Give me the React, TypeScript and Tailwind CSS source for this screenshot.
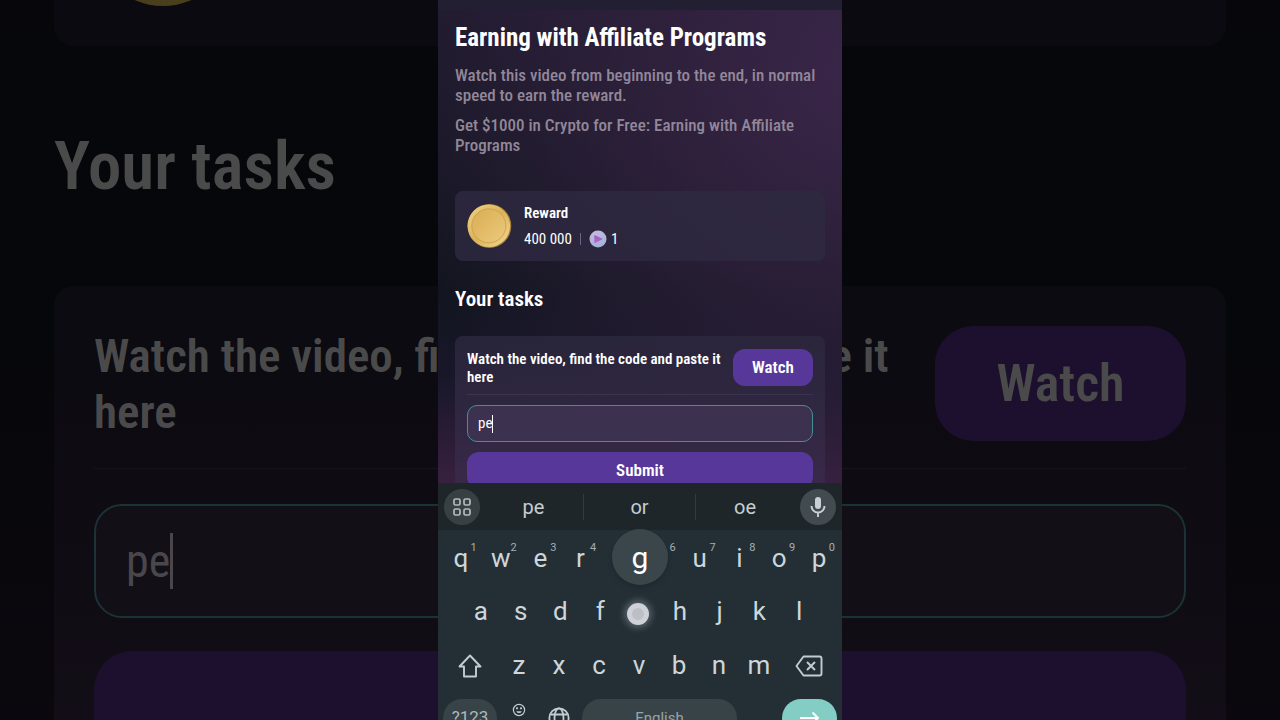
import { useState } from "react";

const topRow = ["q", "w", "e", "r", "t", "y", "u", "i", "o", "p"];
const middleRow = ["a", "s", "d", "f", "g", "h", "j", "k", "l"];
const bottomRow = ["z", "x", "c", "v", "b", "n", "m"];
const suggestions = ["pe", "or", "oe"];

function Coin({ className }: { className: string }) {
  return (
    <svg viewBox="0 0 46 46" className={className} aria-hidden="true">
      <defs>
        <linearGradient id="coinRim" x1="0" y1="0" x2="1" y2="1">
          <stop offset="0" stopColor="#efd48a" />
          <stop offset="0.5" stopColor="#dcb257" />
          <stop offset="1" stopColor="#f3dc97" />
        </linearGradient>
        <linearGradient id="coinFace" x1="0" y1="0" x2="1" y2="1">
          <stop offset="0" stopColor="#d9ac52" />
          <stop offset="1" stopColor="#ecca7d" />
        </linearGradient>
      </defs>
      <ellipse cx="22.5" cy="23" rx="21.8" ry="22" fill="#a67f3a" />
      <circle cx="21.8" cy="22.8" r="21.3" fill="url(#coinRim)" />
      <circle cx="21.8" cy="22.8" r="17" fill="url(#coinFace)" stroke="#c39a4a" strokeWidth="0.7" />
    </svg>
  );
}

function Token() {
  return (
    <svg viewBox="0 0 18 18" className="size-[18px]" aria-hidden="true">
      <defs>
        <linearGradient id="token" x1="0" y1="0" x2="0.3" y2="1">
          <stop offset="0" stopColor="#cdb9dc" />
          <stop offset="1" stopColor="#a3b3da" />
        </linearGradient>
        <linearGradient id="tokenPlay" x1="0" y1="0" x2="0" y2="1">
          <stop offset="0" stopColor="#8c62c6" />
          <stop offset="1" stopColor="#c263cb" />
        </linearGradient>
      </defs>
      <circle cx="9" cy="9" r="8.5" fill="url(#token)" />
      <path d="M6 5.2 13 8.6Q13.8 9.1 13 9.6L6 13Q5.3 13.2 5.3 12.4L5.3 5.8Q5.3 5 6 5.2Z" fill="url(#tokenPlay)" />
    </svg>
  );
}

function Backdrop() {
  return (
    <div
      aria-hidden="true"
      className="[grid-area:1/1] flex flex-col overflow-hidden px-[54px] text-[#4a4a4b] bg-[linear-gradient(#07070b,#06070a_40%,#0b070e)]"
    >
      <div className="h-[46px] shrink-0 overflow-hidden rounded-b-[20px] bg-[#0a0a10] pl-[38px]">
        <div className="-mt-[136px] size-[142px] rounded-full bg-[#4a3f1d]" />
      </div>
      <h2 className="mt-[80px] text-[67px] leading-[80px] font-semibold">Your tasks</h2>
      <div className="mt-[80px] shrink-0 rounded-t-[20px] bg-[linear-gradient(#0b0b11,#0e0b12_40%,#130e17)] px-10 pt-10">
        <div className="flex items-start justify-between border-b border-[#15131b] pb-[27px]">
          <p className="w-[800px] pt-[2px] text-[47px] leading-[56px] font-semibold">
            Watch the video, find the code and paste it here
          </p>
          <button tabIndex={-1} className="h-[115px] w-[251px] rounded-[38px] bg-[#1c102e] text-[52px] font-semibold">
            Watch
          </button>
        </div>
        <div className="mt-[35px] flex h-[114px] items-center rounded-[28px] border-2 border-[#1b3336] bg-[#120f17] px-[30px]">
          <input
            readOnly
            tabIndex={-1}
            aria-label="Code"
            value="pe"
            className="field-sizing-content bg-transparent text-[46px] text-[#4a474c] outline-none"
          />
          <span className="h-14 w-[3px] shrink-0 bg-[#4a474c]" />
        </div>
        <button tabIndex={-1} className="mt-[33px] h-[115px] w-full rounded-[38px] bg-[#1c102e]" aria-label="Submit" />
      </div>
    </div>
  );
}

function Key({ letter, hint }: { letter: string; hint?: string }) {
  return (
    <button className="relative flex h-[53px] flex-1 items-center justify-center text-[26px] text-[#cdd6da]">
      {letter}
      {hint && <span className="absolute top-[10px] right-1 text-[11px] leading-3 text-[#a5afb4]">{hint}</span>}
    </button>
  );
}

function Keyboard() {
  return (
    <div className="h-[237px] shrink-0 overflow-hidden bg-[#232f35] font-[Roboto,sans-serif]">
      <div className="flex h-[47px] items-center bg-[#1f2629] px-[6px]">
        <button aria-label="Menu" className="flex size-9 items-center justify-center rounded-full bg-[#384044]">
          <svg viewBox="0 0 18 18" className="size-[18px]" fill="none" stroke="#b3bac0" strokeWidth="1.7">
            <rect x="1" y="1" width="6" height="6" rx="1.5" />
            <rect x="11" y="1" width="6" height="6" rx="1.5" />
            <rect x="1" y="11" width="6" height="6" rx="1.5" />
            <rect x="11" y="11" width="6" height="6" rx="1.5" />
          </svg>
        </button>
        <div className="grid flex-1 grid-cols-[1fr_112px_1fr] divide-x divide-[#343b3f]">
          {suggestions.map((word) => (
            <button key={word} className="h-[26px] text-[20px] leading-[26px] text-[#c6cdd1] first:pl-1 last:pr-[6px]">
              {word}
            </button>
          ))}
        </div>
        <button aria-label="Voice input" className="flex size-9 items-center justify-center rounded-full bg-[#414b50]">
          <svg viewBox="0 0 16 22" className="h-[22px] w-4">
            <rect x="5" y="1" width="6" height="12" rx="3" fill="#c9d1d5" />
            <path d="M1.5 10a6.5 6.5 0 0 0 13 0M8 16.5V21" fill="none" stroke="#c9d1d5" strokeWidth="1.9" />
          </svg>
        </button>
      </div>

      <div className="px-[3px] pt-[2px]">
        <div className="flex">
          {topRow.map((letter, i) => (
            <Key key={letter} letter={letter} hint={String((i + 1) % 10)} />
          ))}
        </div>
        <div className="flex px-5">
          {middleRow.map((letter) =>
            letter === "g" ? (
              // pressed key with its popup and the touch point
              <div key={letter} className="relative flex h-[53px] flex-1 items-center justify-center">
                <span className="absolute bottom-[53px] left-1/2 flex size-14 -translate-x-1/2 items-center justify-center rounded-full bg-[#3b464a] text-[30px] text-white shadow-md">
                  {letter}
                </span>
                <button
                  aria-label="g"
                  className="mt-1 mr-1 size-[22px] rounded-full border-[5px] border-[#ced2d8] bg-[#bcc0c6] shadow-[0_0_6px_3px_rgba(160,170,178,0.4)]"
                />
              </div>
            ) : (
              <Key key={letter} letter={letter} />
            )
          )}
        </div>
        <div className="flex pt-px">
          <button aria-label="Shift" className="flex h-[53px] w-[58px] items-center justify-center">
            <svg viewBox="0 0 24 24" className="size-6" fill="none" stroke="#c3ccd1" strokeWidth="1.9" strokeLinejoin="round">
              <path d="M12 1.5 1.5 12.5H6V22.5H18V12.5H22.5Z" />
            </svg>
          </button>
          {bottomRow.map((letter) => (
            <Key key={letter} letter={letter} />
          ))}
          <button aria-label="Backspace" className="flex h-[53px] w-[60px] items-center justify-center">
            <svg viewBox="0 0 28 22" className="h-[22px] w-7" fill="none" stroke="#c3ccd1" strokeWidth="1.9" strokeLinejoin="round">
              <path d="M8.5 1.5H24.5Q26.5 1.5 26.5 3.5V18.5Q26.5 20.5 24.5 20.5H8.5L1.5 11Z" />
              <path d="m12 7 8 8m0-8-8 8" />
            </svg>
          </button>
        </div>
        <div className="flex items-start px-[2px] pt-[7px]">
          <button className="h-[38px] w-[54px] rounded-[19px] bg-[#384348] text-[17px] text-[#aeb8bc]">?123</button>
          <button aria-label="Emoji" className="mt-1 flex w-11 justify-center">
            <svg viewBox="0 0 14 14" className="size-[14px]" fill="none" stroke="#c3ccd1" strokeWidth="1.2">
              <circle cx="7" cy="7" r="5.6" />
              <path d="M4.2 8.2a3 3 0 0 0 5.6 0Z" fill="#c3ccd1" stroke="none" />
              <circle cx="5" cy="5.3" r="0.5" />
              <circle cx="9" cy="5.3" r="0.5" />
            </svg>
          </button>
          <button aria-label="Language" className="mt-2 flex w-9 justify-center">
            <svg viewBox="0 0 22 22" className="size-[22px]" fill="none" stroke="#c3ccd1" strokeWidth="1.8">
              <circle cx="11" cy="11" r="9.6" />
              <ellipse cx="11" cy="11" rx="4.5" ry="9.6" />
              <path d="M2.5 7.5H19.5M2.5 14.5H19.5" />
            </svg>
          </button>
          <button className="ml-[5px] h-[38px] flex-1 rounded-[19px] bg-[#384348] text-[15px] text-[#98a3a8]">English</button>
          <span className="w-[45px]" />
          <button aria-label="Enter" className="flex h-[38px] w-[55px] items-center justify-center rounded-[19px] bg-[#83cdc4]">
            <svg viewBox="0 0 20 14" className="h-[14px] w-5" fill="none" stroke="#fff" strokeWidth="2">
              <path d="M0 7H18M12.5 1.5 18 7l-5.5 5.5" />
            </svg>
          </button>
        </div>
      </div>
    </div>
  );
}

export default function App() {
  const [code, setCode] = useState("pe");

  return (
    <div className="grid h-screen grid-cols-1 grid-rows-1 overflow-hidden bg-black font-['Roboto_Condensed',Roboto,sans-serif]">
      <Backdrop />

      <main className="z-10 [grid-area:1/1] mx-auto flex min-h-0 w-full max-w-[404px] flex-col text-white">
        <div className="flex min-h-0 flex-1 flex-col overflow-hidden bg-[radial-gradient(ellipse_at_105%_15%,#3a2649_0%,rgba(53,35,66,0.7)_35%,transparent_80%),linear-gradient(#1f1b2e,#12151f_60%,#18172a_78%,#38203f)]">
          <div className="h-[10px] shrink-0 bg-[#231f32]" />
          <div className="px-[17px] pt-[13px]">
            <h1 className="text-[25px] leading-[30px] font-bold">Earning with Affiliate Programs</h1>
            <p className="mt-3 text-[17px] leading-5 font-medium text-[#928799]">
              Watch this video from beginning to the end, in normal speed to earn the reward.
            </p>
            <p className="mt-[10px] text-[17px] leading-5 font-medium text-[#928799]">
              Get $1000 in Crypto for Free: Earning with Affiliate Programs
            </p>

            <section className="mt-9 flex h-[70px] items-center rounded-lg bg-[#2e2941]/80 px-3">
              <Coin className="size-[46px]" />
              <div className="ml-[11px]">
                <h3 className="text-[15px] leading-[18px] font-semibold">Reward</h3>
                <div className="mt-2 flex items-center text-[15px] leading-[18px]">
                  <span>400 000</span>
                  <span className="mx-2 h-3 w-px bg-[#6b6580]" />
                  <Token />
                  <span className="ml-1">1</span>
                </div>
              </div>
            </section>

            <h2 className="mt-[25px] text-[21px] leading-[26px] font-semibold">Your tasks</h2>

            <section className="mt-6 rounded-t-lg bg-[linear-gradient(rgba(44,40,62,0.8),rgba(60,44,78,0.8))] px-3 pt-[13px] pb-10">
              <div className="flex items-start justify-between border-b border-[#3a344c] pb-2">
                <p className="max-w-[260px] pt-px text-[15px] leading-[18px] font-semibold">
                  Watch the video, find the code and paste it here
                </p>
                <button className="h-[37px] w-20 shrink-0 rounded-xl bg-[#57389a] text-[17px] font-semibold">Watch</button>
              </div>
              <label htmlFor="code" className="sr-only">
                Code
              </label>
              <div className="mt-[10px] flex h-[37px] items-center rounded-[10px] border border-[#45908f] bg-[#3c3250] px-[10px]">
                <input
                  id="code"
                  value={code}
                  onChange={(e) => setCode(e.target.value)}
                  className="field-sizing-content bg-transparent text-[15px] outline-none"
                />
                <span className="h-[18px] w-px shrink-0 bg-white" />
              </div>
              <button className="mt-[10px] h-[37px] w-full rounded-xl bg-[#57389a] text-[17px] font-semibold">Submit</button>
            </section>
          </div>
        </div>

        <Keyboard />
      </main>
    </div>
  );
}
